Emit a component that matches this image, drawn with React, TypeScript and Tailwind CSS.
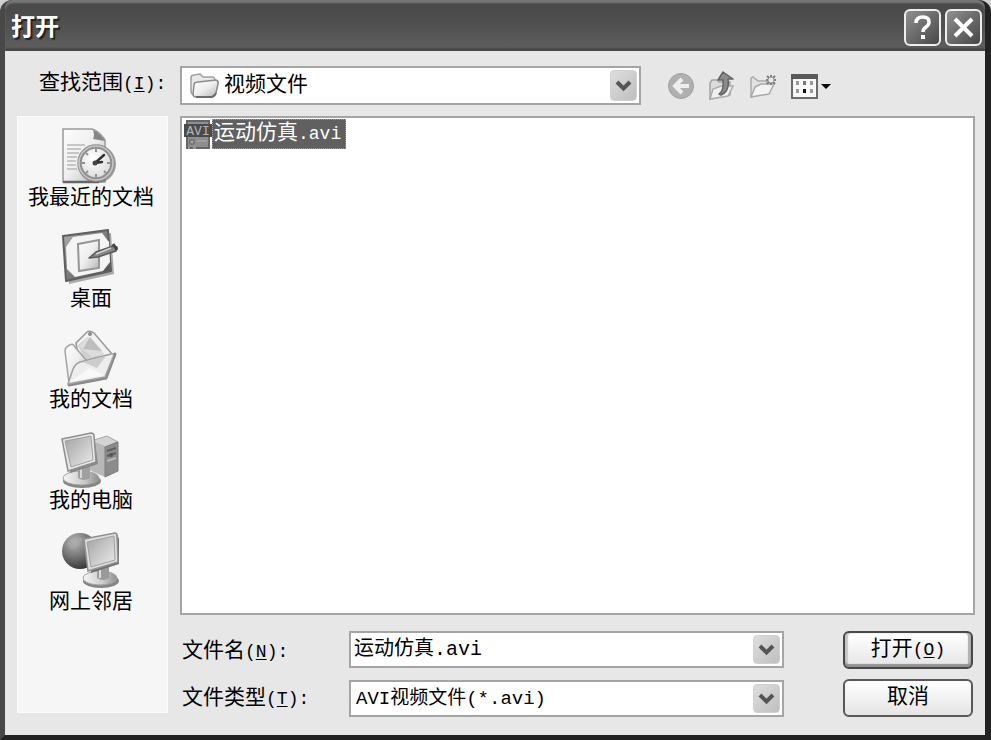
import { useState } from 'react';
import type { ReactNode } from 'react';

interface Place {
  id: string;
  label: string;
  icon: ReactNode;
}

// Shared gradients, referenced by id from every drawing on the page
function Gradients() {
  return (
    <svg width="0" height="0" className="absolute" aria-hidden="true">
      <defs>
        <linearGradient id="paper" x1="0" y1="0" x2="1" y2="1">
          <stop offset="0" stopColor="#fdfdfd" />
          <stop offset="0.5" stopColor="#eeeeee" />
          <stop offset="1" stopColor="#b4b4b4" />
        </linearGradient>
        <linearGradient id="dark" x1="0" y1="0" x2="1" y2="1">
          <stop offset="0" stopColor="#b0b0b0" />
          <stop offset="1" stopColor="#484848" />
        </linearGradient>
        <linearGradient id="screen" x1="0" y1="0" x2="1" y2="1">
          <stop offset="0" stopColor="#a2a2a2" />
          <stop offset="1" stopColor="#ececec" />
        </linearGradient>
        <linearGradient id="base" x1="0" y1="0" x2="1" y2="0">
          <stop offset="0" stopColor="#f6f6f6" />
          <stop offset="0.6" stopColor="#c9c9c9" />
          <stop offset="1" stopColor="#8d8d8d" />
        </linearGradient>
        <radialGradient id="globe" cx="0.35" cy="0.25" r="0.8">
          <stop offset="0" stopColor="#b5b5b5" />
          <stop offset="0.5" stopColor="#777777" />
          <stop offset="1" stopColor="#333333" />
        </radialGradient>
        <radialGradient id="face" cx="0.4" cy="0.35" r="0.7">
          <stop offset="0" stopColor="#ffffff" />
          <stop offset="1" stopColor="#d8d8d8" />
        </radialGradient>
      </defs>
    </svg>
  );
}

function RecentIcon() {
  return (
    <svg width="60" height="58" viewBox="0 0 60 58" aria-hidden="true">
      <path d="M2 2H31Q38 4 44 13V55H2Z" fill="url(#paper)" stroke="#9a9a9a" strokeWidth="1.5" />
      <path d="M2 55H38" stroke="#666" strokeWidth="2.5" />
      <path d="M32 3Q39 6 44 14L32 12Q34 8 32 3Z" fill="#858585" />
      <path d="M6 18H24M6 22H20M6 26H18M6 30H16M6 34H15M6 38H15M6 42H16" stroke="#b8b8b8" strokeWidth="1.5" />
      <circle cx="36" cy="37" r="19" fill="#666" opacity="0.6" />
      <circle cx="35" cy="36" r="16.5" fill="url(#face)" stroke="#8f8f8f" strokeWidth="4.5" />
      <circle cx="35" cy="36" r="17" fill="none" stroke="#c8c8c8" strokeWidth="1.5" />
      <path d="M35 22V25M35 47V50M21 36H24M46 36H49M25 26L27 28M25 46L27 44M45 46L43 44" stroke="#909090" strokeWidth="2" />
      <path d="M34 36L43 28M34 36L41 35" stroke="#333" strokeWidth="2.5" strokeLinecap="round" />
      <circle cx="34" cy="36" r="2.5" fill="#444" />
    </svg>
  );
}

function DesktopIcon() {
  return (
    <svg width="60" height="58" viewBox="0 0 60 58" aria-hidden="true">
      <path d="M4 11L50 5L53 46L8 56Z" fill="#777" opacity="0.6" />
      <path d="M2 8L47 2L50 43L5 53Z" fill="url(#dark)" stroke="#5f5f5f" strokeWidth="2" strokeLinejoin="round" />
      <path d="M12 9L41 5L48 14L49 34L42 43L14 49L6 41L5 19Z" fill="#f4f4f4" />
      <path d="M17 16L38 12V40L18 43Z" fill="url(#paper)" stroke="#969696" strokeWidth="2" />
      <path d="M28 30L35 24L52 18L56 19L55 23L37 29Z" fill="#888" stroke="#5b5b5b" strokeWidth="1.5" strokeLinejoin="round" />
      <path d="M35 26L50 20" stroke="#d2d2d2" strokeWidth="1.5" />
      <path d="M52 16L56 22" stroke="#444" strokeWidth="3" />
    </svg>
  );
}

function DocumentsIcon() {
  return (
    <svg width="60" height="58" viewBox="0 0 60 58" aria-hidden="true">
      <path d="M54 25L45 49L8 56L53 28Z" fill="#777" stroke="#888" strokeWidth="3" strokeLinejoin="round" />
      <path d="M15 14L26 3Q29 1 33 4L51 25L20 42Z" fill="#f1f1f1" stroke="#989898" strokeWidth="1.5" />
      <path d="M17 16L27 8L43 25L25 34Z" fill="#cfcfcf" />
      <path d="M27 8L43 25L31 28L18 17Z" fill="#dcdcdc" />
      <path d="M29 8L41 22L22 20Z" fill="#bdbdbd" />
      <path d="M4 22Q4 18 9 16Q12 14 14 18L25 31L8 54Z" fill="url(#paper)" stroke="#a3a3a3" strokeWidth="1.5" />
      <path d="M7 55L12 40Q14 35 19 33L50 25Q54 24 52 28L44 48Z" fill="#ededed" stroke="#a0a0a0" strokeWidth="1.5" strokeLinejoin="round" />
      <path d="M22 33L36 39L45 27Z" fill="#cccccc" />
      <path d="M9 53L28 39L43 46Z" fill="#f8f8f8" />
      <circle cx="29" cy="5" r="2" fill="#8c8c8c" />
    </svg>
  );
}

function ComputerIcon() {
  return (
    <svg width="60" height="58" viewBox="0 0 60 58" aria-hidden="true">
      <path d="M30 11L46 6L57 12L44 17Z" fill="#d3d3d3" stroke="#a5a5a5" />
      <path d="M30 11L44 17V47L28 40Z" fill="#b8b8b8" />
      <path d="M44 17L57 12V41L44 47Z" fill="#8b8b8b" stroke="#7d7d7d" />
      <path d="M46 21L55 18M46 26L55 23" stroke="#606060" strokeWidth="2" />
      <path d="M46 31L55 28" stroke="#b8b8b8" strokeWidth="2" />
      <circle cx="50" cy="25" r="2" fill="#555" />
      <ellipse cx="21" cy="51" rx="19" ry="7" fill="#858585" />
      <ellipse cx="20" cy="48" rx="18" ry="7" fill="url(#base)" stroke="#a3a3a3" />
      <path d="M17 35H29V48Q23 52 17 48Z" fill="#a0a0a0" />
      <path d="M20 38V48" stroke="#d8d8d8" strokeWidth="2" />
      <path d="M3 10L33 5L37 34L9 43Z" fill="#868686" />
      <path d="M1 9L30 3Q33 3 33 6L35 32L7 41Z" fill="#e8e8e8" stroke="#8f8f8f" strokeWidth="1.5" />
      <path d="M4 11L30 6L32 30L10 37Z" fill="url(#screen)" stroke="#a0a0a0" />
    </svg>
  );
}

function NetworkIcon() {
  return (
    <svg width="60" height="58" viewBox="0 0 60 58" aria-hidden="true">
      <circle cx="19" cy="20" r="18" fill="url(#globe)" />
      <path d="M6 13Q12 5 20 6Q24 10 18 13Q15 19 10 18Z" fill="#aaa" opacity="0.5" />
      <ellipse cx="40" cy="50" rx="18" ry="7" fill="#858585" />
      <ellipse cx="39" cy="47" rx="17" ry="7" fill="url(#base)" stroke="#a3a3a3" />
      <path d="M36 34H48V47Q42 51 36 47Z" fill="#9a9a9a" />
      <path d="M39 37V47" stroke="#ddd" strokeWidth="2" />
      <path d="M28 9L56 3L58 8V33L30 42Z" fill="#707070" />
      <path d="M23 8L54 2Q56 2 56 5L57 31L27 40Z" fill="#dedede" stroke="#909090" strokeWidth="1.5" />
      <path d="M26 11L53 5L54 29L30 36Z" fill="url(#screen)" stroke="#a0a0a0" />
    </svg>
  );
}

function FolderIcon() {
  return (
    <svg width="30" height="26" viewBox="0 0 30 26" aria-hidden="true">
      <path d="M4 22Q1 21 1 18V5Q1 2 4 2L10 1L13 4H22Q25 4 25 8V20Z" fill="#e9e9e9" stroke="#a0a0a0" strokeWidth="1.5" />
      <path d="M6 24Q3 24 3 21L4 12Q4 9 8 9L26 7Q29 8 28 11L26 20Q24 24 21 24Z" fill="url(#paper)" stroke="#8c8c8c" strokeWidth="1.5" />
      <path d="M6 24H21Q24 24 26 20" fill="none" stroke="#6b6b6b" strokeWidth="2" />
    </svg>
  );
}

function AviIcon() {
  return (
    <svg width="28" height="29" viewBox="0 0 28 29" aria-hidden="true">
      <path d="M3 1H25V28H3Z" fill="#8f8f8f" stroke="#666" strokeWidth="2" />
      <path d="M0 4H28V17H0Z" fill="#4b4b4b" />
      <path d="M6 20H10V24H6Z" fill="#aaa" stroke="#5b5b5b" />
      <path d="M13 21H23M4 28H6M9 28H12" stroke="#a5a5a5" strokeWidth="1.5" />
      <text x="14" y="15" textAnchor="middle" fontFamily="Liberation Mono, monospace" fontSize="13" fill="#b6b6b6">
        AVI
      </text>
    </svg>
  );
}

function BackIcon() {
  return (
    <svg width="28" height="30" viewBox="0 0 28 30" aria-hidden="true">
      <circle cx="14" cy="15" r="12.5" fill="#b0b0b0" stroke="#a0a0a0" />
      <path d="M22 15H8M15 8L8 15L15 22" fill="none" stroke="#eeeeee" strokeWidth="4" />
    </svg>
  );
}

function UpIcon() {
  return (
    <svg width="28" height="30" viewBox="0 0 28 30" aria-hidden="true">
      <path d="M2 28V12L4 9H9L11 11H22V24Z" fill="#dcdcdc" stroke="#a3a3a3" strokeWidth="1.5" />
      <path d="M2 28L5 18L13 15H25L20 25Z" fill="#f0f0f0" stroke="#acacac" strokeWidth="1.5" />
      <path d="M11 23Q16 20 15 9H10L15 1L25 8H20Q22 20 13 24Z" fill="#8b8b8b" stroke="#646464" strokeWidth="1.5" strokeLinejoin="round" />
    </svg>
  );
}

function NewFolderIcon() {
  return (
    <svg width="28" height="30" viewBox="0 0 28 30" aria-hidden="true">
      <path d="M2 26V7L4 6L9 10H18V21Z" fill="#e2e2e2" stroke="#acacac" strokeWidth="1.5" />
      <path d="M2 26L6 16L12 13H25L20 23Z" fill="#f3f3f3" stroke="#a8a8a8" strokeWidth="1.5" strokeLinejoin="round" />
      <path d="M22 4V14M17 9H27M18 5L26 13M26 5L18 13" stroke="#808080" strokeWidth="2" />
      <circle cx="22" cy="9" r="2.5" fill="#ececec" />
    </svg>
  );
}

function ViewsIcon() {
  return (
    <svg width="42" height="30" viewBox="0 0 42 30" aria-hidden="true">
      <path d="M2 4H27V27H2Z" fill="#f7f7f7" stroke="#6b6b6b" strokeWidth="2" />
      <path d="M1 3H28V8H1Z" fill="#595959" />
      <path d="M6 10H9V14H6ZM20 10H23V14H20ZM6 18H9V22H6ZM20 18H23V22H20Z" fill="#999" />
      <path d="M13 10H16V14H13Z" fill="#777" />
      <path d="M13 18H16V22H13Z" fill="#111" />
      <path d="M31 13H41L36 18Z" fill="#000" />
    </svg>
  );
}

function Chevron() {
  return (
    <span className="flex h-full w-[27px] items-center justify-center rounded-sm border border-[#d0d0d0] bg-linear-to-br from-[#dedede] to-[#bfbfbf]">
      <svg width="17" height="12" viewBox="0 0 17 12" aria-hidden="true">
        <path d="M2 2L8.5 8.5L15 2" fill="none" stroke="#555555" strokeWidth="4" />
      </svg>
    </span>
  );
}

// Half-width part of a label, with the underlined access key
function AccessKey({ letter }: { letter: string }) {
  return (
    <span className="text-[18px]">
      (<u className="underline-offset-2">{letter}</u>)
    </span>
  );
}

const places: Place[] = [
  { id: 'recent', label: '我最近的文档', icon: <RecentIcon /> },
  { id: 'desktop', label: '桌面', icon: <DesktopIcon /> },
  { id: 'documents', label: '我的文档', icon: <DocumentsIcon /> },
  { id: 'computer', label: '我的电脑', icon: <ComputerIcon /> },
  { id: 'network', label: '网上邻居', icon: <NetworkIcon /> },
];

const tools = [
  { label: '后退', icon: <BackIcon /> },
  { label: '向上一级', icon: <UpIcon /> },
  { label: '新建文件夹', icon: <NewFolderIcon /> },
  { label: '查看菜单', icon: <ViewsIcon /> },
];

export default function App() {
  const [fileName, setFileName] = useState('运动仿真.avi');

  return (
    <div className="min-h-screen bg-[#d0d0d0]">
      <Gradients />
      <div className="flex min-h-screen flex-col rounded-t-xl border-r-[6px] border-b-[5px] border-l-[5px] border-r-[#222222] border-b-[#222222] border-l-[#484848] bg-[#484848] font-['Liberation_Mono','Noto_Sans_CJK_SC',monospace] text-[21px] leading-7 text-black">
        <header className="flex h-[51px] items-center justify-between rounded-t-lg bg-linear-to-b from-[#484848] via-[#505050] to-[#606060] pt-1 pr-[3px] pl-[6px] shadow-[inset_0_3px_2px_#777777,inset_0_-3px_2px_#484848]">
          <h1 className="pt-[2px] text-[24px] font-bold text-white [text-shadow:2px_2px_1px_#222222]">打开</h1>
          <div className="flex gap-1">
            <button aria-label="帮助" className="flex size-[37px] items-center justify-center rounded-md border-2 border-[#eeeeee] bg-linear-to-br from-[#909090] to-[#484848]">
              <svg width="25" height="27" viewBox="0 0 25 27" aria-hidden="true">
                <path d="M6 9Q6 3 13 3Q19 3 19 8Q19 11 16 13Q13 15 13 18" fill="none" stroke="#fff" strokeWidth="3.5" />
                <path d="M11 21H15V25H11Z" fill="#fff" />
              </svg>
            </button>
            <button aria-label="关闭" className="flex size-[37px] items-center justify-center rounded-md border-2 border-[#eeeeee] bg-linear-to-br from-[#909090] to-[#484848]">
              <svg width="25" height="27" viewBox="0 0 25 27" aria-hidden="true">
                <path d="M4 5L21 22M21 5L4 22" stroke="#fff" strokeWidth="4" />
              </svg>
            </button>
          </div>
        </header>

        <main className="flex flex-1 flex-col gap-[11px] bg-[#e7e7e7] pt-[15px] pr-[10px] pb-[18px] pl-3">
          <div className="flex items-center">
            <label htmlFor="look-in" className="w-[163px] shrink-0 pb-1 pl-[22px] whitespace-nowrap">
              查找范围<AccessKey letter="I" />
              <span className="text-[18px]">:</span>
            </label>
            <div className="relative flex h-[39px] flex-1 items-center gap-1 border-2 border-[#a5a5a5] bg-white pl-2">
              <FolderIcon />
              <select id="look-in" className="h-full min-w-0 flex-1 appearance-none bg-transparent outline-none">
                <option>视频文件</option>
              </select>
              <span className="pointer-events-none absolute inset-y-[2px] right-[2px]">
                <Chevron />
              </span>
            </div>
            <div className="flex w-[334px] shrink-0 items-center gap-[13px] pl-[26px]">
              {tools.map((tool) => (
                <button key={tool.label} aria-label={tool.label}>
                  {tool.icon}
                </button>
              ))}
            </div>
          </div>

          <div className="flex flex-1 gap-3">
            <nav className="mb-1 flex w-[151px] shrink-0 flex-col gap-[15px] border border-[#fcfcfc] bg-[#f6f6f6] pt-[10px] pr-[3px]">
              {places.map((place) => (
                <button key={place.id} className="flex flex-col items-center whitespace-nowrap">
                  {place.icon}
                  {place.label}
                </button>
              ))}
            </nav>

            <div className="flex min-w-0 flex-1 flex-col gap-4">
              <ul className="flex-1 border-2 border-[#a5a5a5] bg-white pt-px pl-[2px]">
                <li>
                  <button className="flex items-center">
                    <AviIcon />
                    <span className="h-[30px] border border-dotted border-[#999999] bg-[#606060] pr-1 pl-px text-white">
                      运动仿真<span className="text-[18px]">.avi</span>
                    </span>
                  </button>
                </li>
              </ul>

              <div className="flex items-center justify-between gap-[59px] pr-[2px]">
                <div className="grid flex-1 grid-cols-[169px_1fr] items-center gap-y-3">
                  <label htmlFor="file-name" className="pt-1 pl-[2px] whitespace-nowrap">
                    文件名<AccessKey letter="N" />
                    <span className="text-[18px]">:</span>
                  </label>
                  <div className="flex h-[37px] border-2 border-[#a5a5a5] bg-white py-[2px] pr-[2px] pl-[3px]">
                    <input
                      id="file-name"
                      value={fileName}
                      onChange={(e) => setFileName(e.target.value)}
                      className="min-w-0 flex-1 text-[20px] outline-none"
                    />
                    <button aria-label="文件名列表">
                      <Chevron />
                    </button>
                  </div>

                  <label htmlFor="file-type" className="pl-[2px] whitespace-nowrap">
                    文件类型<AccessKey letter="T" />
                    <span className="text-[18px]">:</span>
                  </label>
                  <div className="relative flex h-[37px] border-2 border-[#a5a5a5] bg-white pl-[5px]">
                    <select id="file-type" className="min-w-0 flex-1 appearance-none bg-transparent text-[19px] outline-none">
                      <option>AVI视频文件(*.avi)</option>
                    </select>
                    <span className="pointer-events-none absolute inset-y-[2px] right-[2px]">
                      <Chevron />
                    </span>
                  </div>
                </div>

                <div className="flex w-[130px] shrink-0 flex-col gap-[10px]">
                  <button className="h-[38px] rounded-md border-2 border-[#484848] bg-linear-to-b from-white to-[#e5e5e5] shadow-[inset_0_-3px_1px_#929292,inset_3px_0_1px_#c8c8c8,inset_-3px_0_1px_#b0b0b0]">
                    打开<AccessKey letter="O" />
                  </button>
                  <button className="h-[38px] rounded-md border-2 border-[#585858] bg-linear-to-b from-white to-[#e5e5e5]">
                    取消
                  </button>
                </div>
              </div>
            </div>
          </div>
        </main>
      </div>
    </div>
  );
}
